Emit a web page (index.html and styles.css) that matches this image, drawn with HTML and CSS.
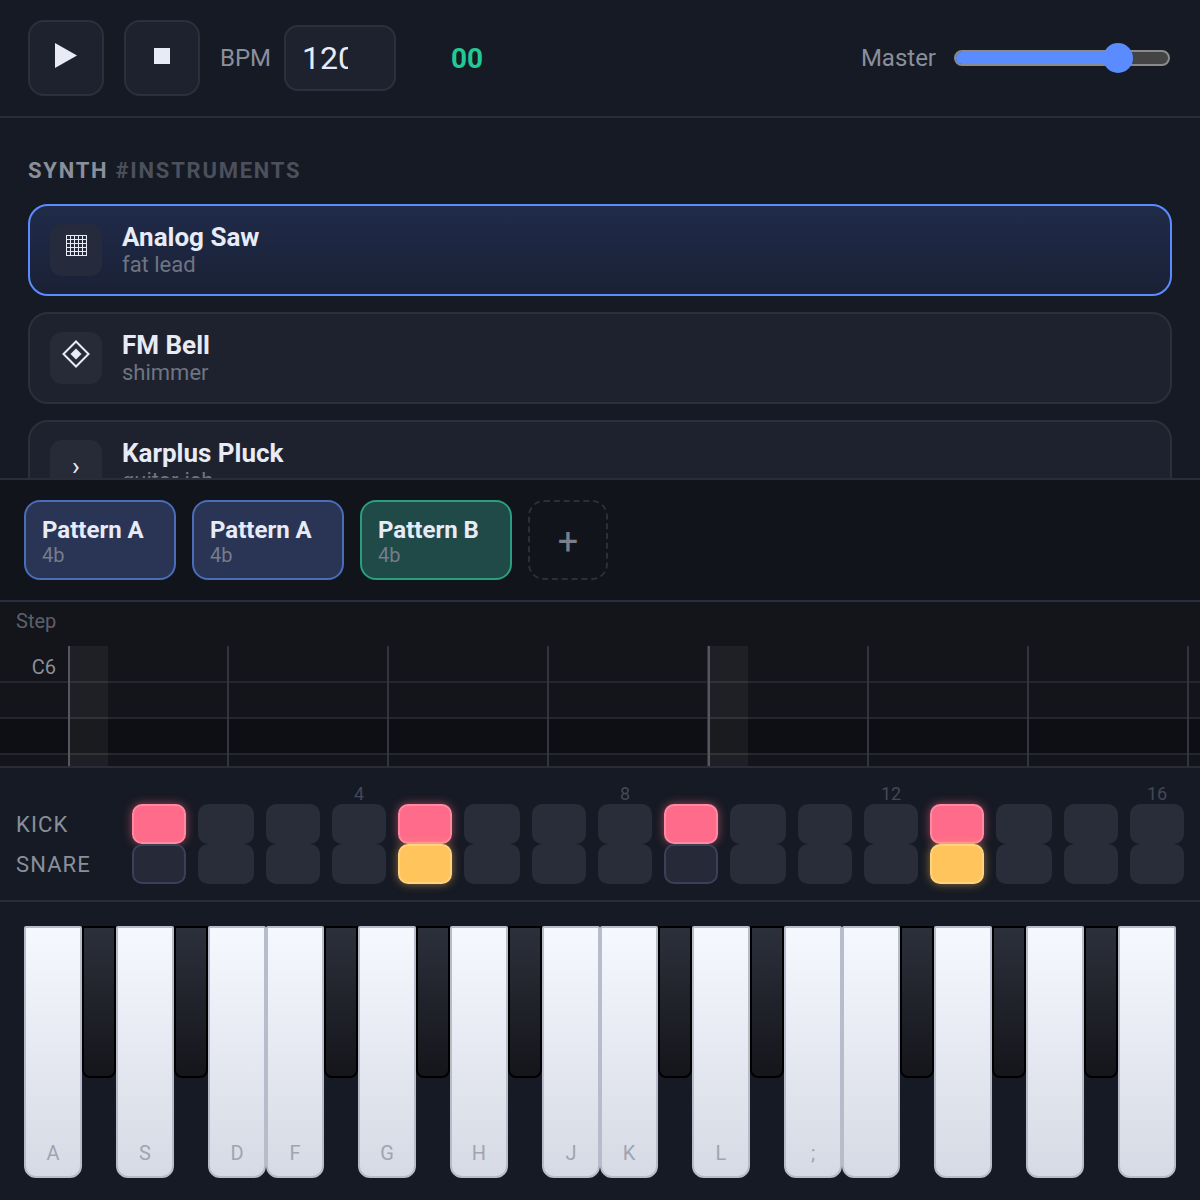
FILE: index.html
```html
<!DOCTYPE html>
<html lang="en">
<head>
<meta charset="utf-8">
<title>Synth</title>
<link rel="stylesheet" href="styles.css">
</head>
<body>
<div class="app">
  <header class="topbar">
    <button class="transport" aria-label="Play"><svg width="22" height="26" viewBox="0 0 22 26"><polygon points="0,0 22,12.5 0,25" fill="#e8ebf5"/></svg></button>
    <button class="transport" aria-label="Stop"><svg width="16" height="16" viewBox="0 0 16 16"><rect width="16" height="16" fill="#e8ebf5"/></svg></button>
    <span class="bpm-label">BPM</span>
    <input class="bpm-input" type="text" value="120" aria-label="BPM">
    <span class="clock">00</span>
    <span class="master-label">Master</span>
    <div class="slider"><div class="slider-fill" style="width:162px"><span class="slider-thumb"></span></div></div>
  </header>

  <section class="instruments">
    <h2 class="section-title">SYNTH <span class="section-tag">#INSTRUMENTS</span></h2>
    <div class="inst-list">
      <div class="inst inst-active">
        <div class="inst-icon"><svg class="icon-grid" width="22" height="22" viewBox="0 0 22 22" fill="none" stroke="#e8ebf5" stroke-width="1"><rect x="1.5" y="1.5" width="20" height="20"/><path d="M5.5 1.5v20M9.5 1.5v20M13.5 1.5v20M17.5 1.5v20M1.5 5.5h20M1.5 9.5h20M1.5 13.5h20M1.5 17.5h20"/></svg></div>
        <div class="inst-text"><div class="inst-name">Analog Saw</div><div class="inst-sub">fat lead</div></div>
      </div>
      <div class="inst">
        <div class="inst-icon"><svg class="icon-diamond" width="30" height="30" viewBox="0 0 30 30"><polygon points="15,2.5 27.5,15 15,27.5 2.5,15" fill="none" stroke="#e8ebf5" stroke-width="2"/><polygon points="15,9.5 20.5,15 15,20.5 9.5,15" fill="#e8ebf5"/></svg></div>
        <div class="inst-text"><div class="inst-name">FM Bell</div><div class="inst-sub">shimmer</div></div>
      </div>
      <div class="inst">
        <div class="inst-icon inst-glyph">›</div>
        <div class="inst-text"><div class="inst-name">Karplus Pluck</div><div class="inst-sub">guitar-ish</div></div>
      </div>
    </div>
  </section>

  <section class="patterns">
    <div class="chip"><div class="chip-name">Pattern A</div><div class="chip-sub">4b</div></div>
    <div class="chip"><div class="chip-name">Pattern A</div><div class="chip-sub">4b</div></div>
    <div class="chip chip-green"><div class="chip-name">Pattern B</div><div class="chip-sub">4b</div></div>
    <div class="chip-add">+</div>
  </section>

  <section class="roll">
    <div class="roll-head">Step</div>
    <div class="roll-body">
      <div class="roll-label">C6</div>
      <div class="roll-row"></div>
      <div class="roll-row"></div>
      <div class="roll-row roll-row-dark"></div>
      <div class="roll-row"></div>
      <div class="roll-lines"></div>
      <div class="roll-beat roll-beat-1"></div>
      <div class="roll-beat roll-beat-2"></div>
    </div>
  </section>

  <section class="steps">
    <div class="step-grid">
      <span></span>
      <span></span><span></span><span></span><span class="step-num">4</span><span></span><span></span><span></span><span class="step-num">8</span><span></span><span></span><span></span><span class="step-num">12</span><span></span><span></span><span></span><span class="step-num">16</span>

      <span class="track-label">KICK</span>
      <div class="cell cell-kick"></div><div class="cell"></div><div class="cell"></div><div class="cell"></div>
      <div class="cell cell-kick"></div><div class="cell"></div><div class="cell"></div><div class="cell"></div>
      <div class="cell cell-kick"></div><div class="cell"></div><div class="cell"></div><div class="cell"></div>
      <div class="cell cell-kick"></div><div class="cell"></div><div class="cell"></div><div class="cell"></div>

      <span class="track-label">SNARE</span>
      <div class="cell cell-beat"></div><div class="cell"></div><div class="cell"></div><div class="cell"></div>
      <div class="cell cell-snare"></div><div class="cell"></div><div class="cell"></div><div class="cell"></div>
      <div class="cell cell-beat"></div><div class="cell"></div><div class="cell"></div><div class="cell"></div>
      <div class="cell cell-snare"></div><div class="cell"></div><div class="cell"></div><div class="cell"></div>
    </div>
  </section>

  <section class="keyboard">
    <div class="white">A</div><div class="black"></div>
    <div class="white">S</div><div class="black"></div>
    <div class="white">D</div>
    <div class="white">F</div><div class="black"></div>
    <div class="white">G</div><div class="black"></div>
    <div class="white">H</div><div class="black"></div>
    <div class="white">J</div>
    <div class="white">K</div><div class="black"></div>
    <div class="white">L</div><div class="black"></div>
    <div class="white">;</div>
    <div class="white"></div><div class="black"></div>
    <div class="white"></div><div class="black"></div>
    <div class="white"></div><div class="black"></div>
    <div class="white"></div>
  </section>
</div>
</body>
</html>
```
FILE: styles.css
```css
* { box-sizing: border-box; }
html, body { margin: 0; padding: 0; }
body {
  width: 1200px;
  height: 1200px;
  overflow: hidden;
  background: #161a24;
  font-family: Roboto, "Liberation Sans", sans-serif;
  color: #e8ebf5;
}
.app { display: flex; flex-direction: column; height: 1200px; }

/* top bar */
.topbar {
  height: 118px;
  flex: none;
  display: flex;
  align-items: center;
  padding: 0 30px 0 28px;
  border-bottom: 2px solid #2a2d37;
}
.transport {
  width: 76px;
  height: 76px;
  margin: 0 20px 0 0;
  padding: 0 0 5px;
  display: flex;
  align-items: center;
  justify-content: center;
  background: #1e222e;
  border: 2px solid #2c303c;
  border-radius: 16px;
}
.bpm-label { font-size: 24px; color: #8a8f9c; margin-right: 13px; }
.bpm-input {
  width: 112px;
  height: 66px;
  padding: 0 46px 0 16px;
  background: #1e222e;
  border: 2px solid #2c303c;
  border-radius: 14px;
  color: #e8ebf5;
  font: 400 32px Roboto, sans-serif;
  outline: none;
}
.clock { margin-left: 55px; font-size: 28px; font-weight: 700; color: #22c995; }
.master-label { margin-left: auto; margin-right: 18px; font-size: 24px; color: #8a8f9c; }
.slider {
  position: relative;
  width: 216px;
  height: 16px;
  background: #444;
  border: 2px solid #8a8a8a;
  border-radius: 8px;
}
.slider-fill {
  position: relative;
  height: 12px;
  background: #5b8cff;
  border-radius: 6px;
}
.slider-thumb {
  position: absolute;
  right: -15px;
  top: -9px;
  width: 30px;
  height: 30px;
  border-radius: 50%;
  background: #5b8cff;
}

/* instruments */
.instruments {
  height: 362px;
  flex: none;
  overflow: hidden;
  padding: 40px 28px 0;
  border-bottom: 2px solid #2a2d37;
}
.section-title {
  margin: 0 0 20px;
  font-size: 22px;
  line-height: 26px;
  font-weight: 700;
  letter-spacing: 1.76px;
  color: #8a8f9c;
}
.section-tag { color: #4c505d; }
.inst-list { display: flex; flex-direction: column; gap: 16px; }
.inst {
  height: 92px;
  flex: none;
  display: flex;
  align-items: center;
  gap: 20px;
  padding: 0 20px;
  background: #1e222e;
  border: 2px solid #2c303c;
  border-radius: 20px;
}
.inst-active {
  background: linear-gradient(180deg, #202b49, #1a2136);
  border-color: #5b8cff;
}
.inst-icon {
  width: 52px;
  height: 52px;
  flex: none;
  display: flex;
  align-items: center;
  justify-content: center;
  background: #272b38;
  border-radius: 12px;
}
.inst-active .inst-icon { background: #252b3d; }
.icon-grid { margin-bottom: 10px; }
.icon-diamond { margin-bottom: 8px; }
.inst-glyph { font-size: 26px; }
.inst-name { font-size: 26px; line-height: 30px; font-weight: 700; color: #e8ebf5; }
.inst-sub { font-size: 22px; line-height: 26px; color: #6f7482; }

/* patterns */
.patterns {
  height: 122px;
  flex: none;
  display: flex;
  align-items: flex-start;
  gap: 16px;
  padding: 20px 24px 0;
  background: #12141b;
  border-bottom: 2px solid #2a2d3c;
}
.chip {
  width: 152px;
  height: 80px;
  padding: 14px 16px 0;
  background: #2a3556;
  border: 2px solid #4a6db8;
  border-radius: 16px;
}
.chip-green { background: #1f4a48; border-color: #2a9d7e; }
.chip-name { font-size: 24px; line-height: 28px; font-weight: 700; color: #e8ebf5; }
.chip-sub { font-size: 20px; line-height: 22px; color: #767c8c; }
.chip-add {
  width: 80px;
  height: 80px;
  display: flex;
  align-items: center;
  justify-content: center;
  padding-top: 4px;
  border: 2px dashed #2c2f39;
  border-radius: 16px;
  font-size: 36px;
  color: #7a7f8c;
}

/* piano roll */
.roll {
  height: 166px;
  flex: none;
  background: #13151b;
  border-bottom: 2px solid #2a2d37;
}
.roll-head {
  height: 44px;
  padding: 7px 0 0 16px;
  font-size: 20px;
  line-height: 24px;
  color: #5c606c;
}
.roll-body {
  position: relative;
  height: 120px;
  padding-top: 1px;
  overflow: hidden;
}
.roll-label {
  position: absolute;
  left: 0;
  top: 8px;
  width: 56px;
  text-align: right;
  font-size: 20px;
  line-height: 26px;
  color: #8a8f9a;
}
.roll-row { height: 36px; border-bottom: 2px solid #25272e; }
.roll-row-dark { background: #0e0f14; }
.roll-lines {
  position: absolute;
  inset: 0 0 0 68px;
  background: repeating-linear-gradient(90deg, #33353c 0, #33353c 1px, transparent 1px, transparent 159px, #33353c 159px, #33353c 160px);
}
.roll-beat {
  position: absolute;
  top: 0;
  bottom: 0;
  width: 40px;
  background: rgba(255, 255, 255, 0.05);
  border-left: 2px solid #55575e;
}
.roll-beat-1 { left: 68px; }
.roll-beat-2 { left: 708px; }

/* step sequencer */
.steps {
  height: 134px;
  flex: none;
  padding: 16px 16px 0;
  border-bottom: 2px solid #2a2d37;
}
.step-grid {
  display: grid;
  grid-template-columns: 104px repeat(4, 54px 56px 54px 54px);
  grid-template-rows: 20px 40px 40px;
  column-gap: 12px;
}
.step-num { font-size: 18px; line-height: 20px; text-align: center; color: #444856; }
.track-label { align-self: center; font-size: 22px; letter-spacing: 1.1px; color: #8a8f9c; }
.cell { border-radius: 10px; background: #292d39; }
.cell-beat { background: #262a38; border: 2px solid #3a4058; }
.cell-kick { background: #ff6b8a; border: 2px solid #ff8aa2; box-shadow: 0 0 10px rgba(255, 107, 138, 0.55); }
.cell-snare { background: #ffc55c; border: 2px solid #ffd27f; box-shadow: 0 0 10px rgba(255, 197, 92, 0.5); }

/* keyboard */
.keyboard {
  flex: 1;
  display: flex;
  align-items: flex-start;
  padding: 24px 0 0 24px;
}
.white {
  width: 58px;
  height: 252px;
  flex: none;
  display: flex;
  align-items: flex-end;
  justify-content: center;
  padding-bottom: 11px;
  background: linear-gradient(180deg, #f6f8ff, #d6dae4);
  border: 2px solid #b8bcca;
  border-radius: 2px 2px 12px 12px;
  font-size: 20px;
  line-height: 24px;
  color: #a0a4b0;
}
.black {
  width: 34px;
  height: 152px;
  flex: none;
  background: linear-gradient(180deg, #2c303b, #15151b);
  border: 2px solid #000;
  border-radius: 0 0 8px 8px;
}
```
